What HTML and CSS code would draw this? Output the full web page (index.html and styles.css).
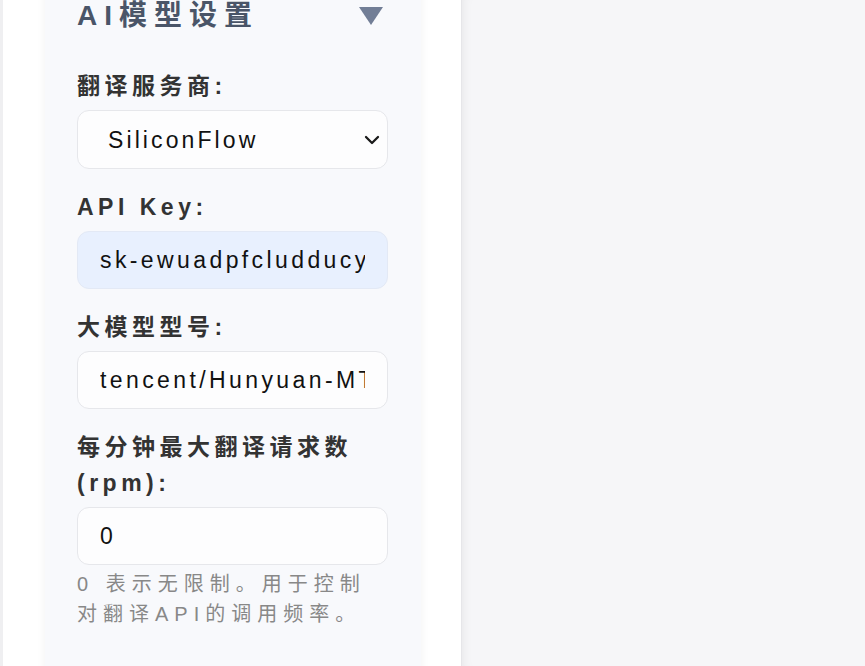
FILE: index.html
```html
<!DOCTYPE html>
<html lang="zh-CN">
<head>
    <meta charset="UTF-8">
    <meta name="viewport" content="width=device-width, initial-scale=1.0">
    <title>AI模型设置</title>
    <link rel="stylesheet" href="styles.css">
</head>
<body>

    <aside class="sidebar">
        <section class="card">
            <div class="card-head">
                <h2 class="card-title">AI模型设置</h2>
                <svg class="toggle" width="24" height="18" viewBox="0 0 24 18">
                    <polygon points="0,0 24,0 12,18" fill="#727e96"/>
                </svg>
            </div>

            <div class="field">
                <label for="provider">翻译服务商:</label>
                <div class="select-wrap">
                    <select id="provider">
                        <option>SiliconFlow</option>
                        <option>OpenAI</option>
                        <option>DeepSeek</option>
                    </select>
                    <svg class="chevron" width="16" height="10" viewBox="0 0 16 10">
                        <path d="M2 2 L8 8 L14 2" fill="none" stroke="#1a1a1a" stroke-width="2.3" stroke-linecap="round" stroke-linejoin="round"/>
                    </svg>
                </div>
            </div>

            <div class="field">
                <label for="api-key">API Key:</label>
                <input type="text" id="api-key" class="autofill" value="sk-ewuadpfcludducy">
            </div>

            <div class="field">
                <label for="model">大模型型号:</label>
                <input type="text" id="model" value="tencent/Hunyuan-MT-7B">
            </div>

            <div class="field">
                <label for="rpm">每分钟最大翻译请求数 (rpm):</label>
                <input type="number" id="rpm" value="0">
                <p class="hint">0 表示无限制。用于控制对翻译API的调用频率。</p>
            </div>
        </section>
    </aside>

    <main class="content"></main>

</body>
</html>
```

FILE: styles.css
```css
body {
    margin: 0;
    height: 100vh;
    overflow: hidden;
    display: flex;
    background: #f6f6f8;
    font-family: "Liberation Sans", "Noto Sans CJK SC", sans-serif;
}
.sidebar {
    width: 462px;
    flex-shrink: 0;
    box-sizing: border-box;
    padding: 0 40px 0 42px;
    background: #ffffff;
    border-left: 3px solid #efeff1;
    border-right: 1px solid #e6e6e9;
}
.content {
    flex: 1;
    background: #f6f6f8;
    box-shadow: inset 10px 0 12px -10px rgba(0, 0, 0, 0.08);
}
.card {
    margin-top: -24px;
    min-height: 760px;
    padding: 24px 33px 0 32px;
    background: #f8f9fc;
    border-radius: 12px;
    box-shadow: 0 0 10px rgba(0, 0, 0, 0.06);
}
.card-head {
    display: flex;
    justify-content: space-between;
    align-items: center;
    margin-bottom: 36px;
}
.card-title {
    margin: 0;
    font-size: 28px;
    line-height: 32px;
    letter-spacing: 7px;
    color: #4a5568;
}
.toggle {
    margin-right: 5px;
}
.field {
    margin-bottom: 20px;
}
label {
    display: block;
    margin-bottom: 6px;
    font-size: 23px;
    font-weight: bold;
    line-height: 36px;
    letter-spacing: 4.5px;
    color: #333333;
}
input, select {
    display: block;
    width: 100%;
    height: 58px;
    box-sizing: border-box;
    padding: 0 22px;
    border: 1px solid #e6e7eb;
    border-radius: 12px;
    background: #fdfdfe;
    font-family: "Liberation Sans", "Noto Sans CJK SC", sans-serif;
    font-size: 23px;
    letter-spacing: 3.4px;
    color: #111111;
    outline: none;
}
input.autofill {
    background: #e8f0fe;
    border-color: #e3e9f5;
}
input[type="number"] {
    appearance: textfield;
}
.select-wrap {
    position: relative;
}
select {
    appearance: none;
    height: 59px;
    padding-left: 30px;
    letter-spacing: 3.1px;
}
.chevron {
    position: absolute;
    right: 8px;
    top: 25px;
    pointer-events: none;
}
.hint {
    margin: 4px 0 0;
    font-size: 20px;
    line-height: 30px;
    letter-spacing: 6px;
    color: #888888;
}
```
